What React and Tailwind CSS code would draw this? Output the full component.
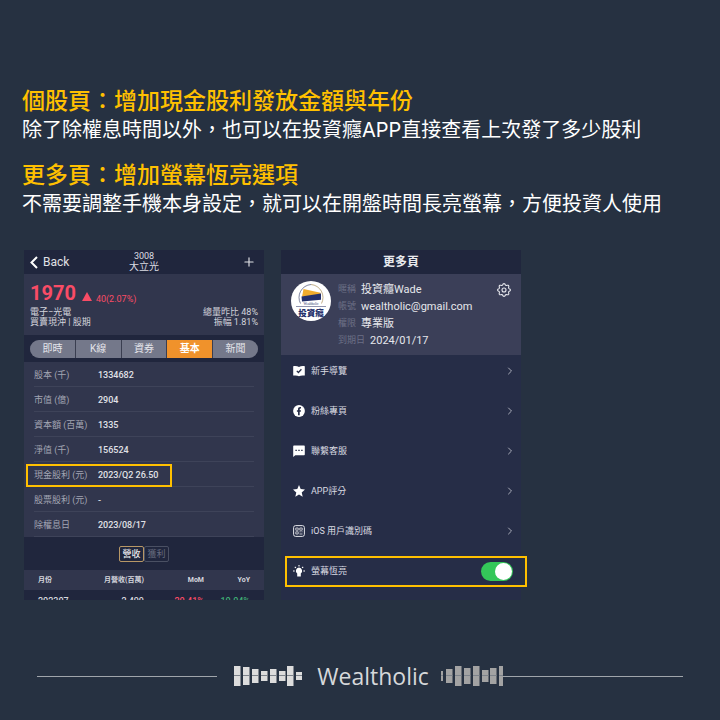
import React, { useState } from 'react';
import { ChevronRight, Plus } from 'lucide-react';

const announcements = [
  {
    title: '個股頁：增加現金股利發放金額與年份',
    text: '除了除權息時間以外，也可以在投資癮APP直接查看上次發了多少股利'
  },
  {
    title: '更多頁：增加螢幕恆亮選項',
    text: '不需要調整手機本身設定，就可以在開盤時間長亮螢幕，方便投資人使用'
  }
];

const tabs = ['即時', 'K線', '資券', '基本', '新聞'];

const fundamentals = [
  { label: '股本 (千)', value: '1334682' },
  { label: '市值 (億)', value: '2904' },
  { label: '資本額 (百萬)', value: '1335' },
  { label: '淨值 (千)', value: '156524' },
  { label: '現金股利 (元)', value: '2023/Q2 26.50', highlight: true },
  { label: '股票股利 (元)', value: '-' },
  { label: '除權息日', value: '2023/08/17' }
];

const profile = [
  { label: '暱稱', value: '投資癮Wade' },
  { label: '帳號', value: 'wealtholic@gmail.com' },
  { label: '權限', value: '專業版' },
  { label: '到期日', value: '2024/01/17' }
];

// [x, height, width] of every bar in the brand mark
const leftBars = [[0, 20], [9, 18], [18, 14], [27, 10], [36, 14], [45, 10], [53, 20], [62, 8]];
const rightBars = [[0, 10, 2], [5, 14], [14, 20], [23, 16], [32, 20], [41, 12], [49, 16], [58, 20, 4]];

const Bars = ({ bars, width, color }) => (
  <svg width={width} height="20" viewBox={`0 0 ${width} 20`} className="shrink-0" aria-hidden="true">
    {bars.map(([x, h, w = 6.5]) => (
      <g key={x}>
        <rect x={x} y={10 - h / 2} width={w} height={h} fill={color} />
        <rect x={x} y="9" width={w} height="1" fill="#7d838b" />
      </g>
    ))}
  </svg>
);

const BackIcon = () => (
  <svg viewBox="0 0 8 13" className="h-[13px] w-2">
    <path d="M7 1 1.500 6.500 7 12" fill="none" stroke="#fff" strokeWidth="2" />
  </svg>
);

// eight-toothed cog, traced as a wavy circle
const gearPoints = Array.from({ length: 96 }, (_, i) => {
  const a = (i / 96) * Math.PI * 2;
  const r = 5.7 + 0.7 * Math.cos(8 * a);
  return `${(7 + r * Math.cos(a)).toFixed(2)},${(7 + r * Math.sin(a)).toFixed(2)}`;
}).join(' ');

const GearIcon = () => (
  <svg viewBox="0 0 14 14" className="size-3.5" fill="none" stroke="#e6e7ec" strokeWidth="1.100">
    <polygon points={gearPoints} />
    <circle cx="7" cy="7" r="2" />
  </svg>
);

const TourIcon = () => (
  <svg viewBox="0 0 12 12" className="size-3">
    <path d="M.2 1.300C2.400.9 4.600 1.200 6 2c1.400-.8 3.600-1.100 5.800-.7v9.300C9.600 10.300 7.400 10.400 6 11.200c-1.400-.8-3.600-.9-5.800-.6z" fill="#fff" />
    <path d="m3.800 5.900 1.600 1.600 3-3.200" fill="none" stroke="#262d47" strokeWidth="1.300" />
  </svg>
);

const FacebookIcon = () => (
  <svg viewBox="0 0 12 12" className="size-3">
    <circle cx="6" cy="6" r="5.900" fill="#fff" />
    <path d="M5 10.300V6.800H3.900V5.200H5v-.9c0-1.700 1-2.500 3-2.200v1.400c-.9 0-1.300.1-1.300.8v.9H8l-.2 1.600H6.700v3.500z" fill="#262d47" />
  </svg>
);

const ChatIcon = () => (
  <svg viewBox="0 0 12 12" className="size-3">
    <path d="M1.200.5h9.600c.6 0 1 .4 1 1v7.700c0 .6-.4 1-1 1H2.300L.2 11.900V1.500c0-.6.4-1 1-1z" fill="#fff" />
    <path d="M2.400 4.700h1.400v1.400H2.400zm2.900 0h1.400v1.400H5.300zm2.900 0h1.400v1.400H8.200z" fill="#262d47" />
  </svg>
);

const StarIcon = () => (
  <svg viewBox="0 0 12 12" className="size-3">
    <path d="m6 .1 1.700 4 4.300.4-3.300 2.900 1 4.300L6 9.400l-3.700 2.300 1-4.300L0 4.500l4.300-.4z" fill="#fff" />
  </svg>
);

const CodeIcon = () => (
  <svg viewBox="0 0 12 12" className="size-3" fill="none" stroke="#e4e5ea">
    <rect x=".6" y=".6" width="10.800" height="10.800" rx="2" strokeWidth="1" />
    <path d="M2.800 3h2.400v2.200H2.800zM6.800 3h2.400v2.200H6.800zM2.800 6.800h2.400V9H2.800zM6.500 6.800h1.200M8.500 6.800h1M6.500 9h3" strokeWidth=".8" />
  </svg>
);

const BulbIcon = () => (
  <svg viewBox="0 0 12 12" className="size-3" stroke="#fff">
    <path d="M6 2.500a3.400 3.400 0 0 1 1.800 6.100v2.800H4.200V8.600A3.400 3.400 0 0 1 6 2.500z" fill="#fff" stroke="none" />
    <path d="M6 .1v1.500M0 6h1.700M10.300 6H12M1.800 1.800l1.100 1.100M10.200 1.800 9.100 2.900" strokeWidth="1.100" />
  </svg>
);

const menu = [
  { label: '新手導覽', icon: TourIcon },
  { label: '粉絲專頁', icon: FacebookIcon },
  { label: '聯繫客服', icon: ChatIcon },
  { label: 'APP評分', icon: StarIcon },
  { label: 'iOS 用戶識別碼', icon: CodeIcon }
];

const Avatar = () => (
  <svg viewBox="0 0 40 40" className="size-10 shrink-0" role="img" aria-label="投資癮">
    <circle cx="20" cy="20" r="20" fill="#fff" />
    <path d="M9.500 22.500A13 13 0 0 1 20 3.500" fill="none" stroke="#5f6688" strokeWidth=".8" />
    <path d="M20 3.500a13 13 0 0 1 10.500 19" fill="none" stroke="#b39a6b" strokeWidth=".8" />
    <path d="m12.500 8 17 3.800v2l-18.500 2z" fill="#f0ac2e" />
    <path d="m10.500 15.500 19.500-3v6.300L11 20.500z" fill="#24306b" />
    <path d="M5 25.500h30" stroke="#73789a" strokeWidth=".8" />
    <text x="20" y="23.600" fontSize="3.500" textAnchor="middle" fill="#24306b" fontFamily="Liberation Serif, serif">Wealtholic</text>
    <text x="20" y="34.500" fontSize="8.500" fontWeight="900" textAnchor="middle" fill="#24306b" fontFamily="'Noto Sans CJK TC', sans-serif">投資癮</text>
  </svg>
);

const StockPanel = () => {
  const [activeTab, setActiveTab] = useState('基本');
  const [report, setReport] = useState('營收');

  return (
    <section className="flex h-[350px] flex-col overflow-hidden bg-[#31364d]">
      <header className="grid h-6 shrink-0 grid-cols-3 items-center bg-[#20263d] px-[6px]">
        <button className="flex items-center gap-[5px] text-[12px] leading-4 text-[#e0e1e6]">
          <BackIcon />
          Back
        </button>
        <div className="text-center text-[10px] leading-3 text-[#dcdde3]">
          <p className="text-[9px] leading-[10px]">3008</p>
          <h3>大立光</h3>
        </div>
        <button aria-label="新增" className="justify-self-end pr-0.5">
          <Plus className="size-3.5 text-[#e0e1e6]" strokeWidth={2} />
        </button>
      </header>

      {/* Quote */}
      <div className="h-[61px] shrink-0 px-[6px] pt-2">
        <div className="flex items-center text-[#f94c66]">
          <span className="text-[20px] leading-[23px] font-bold">1970</span>
          <svg viewBox="0 0 10 9" className="mt-1.5 ml-[6px] h-[9px] w-[10px]">
            <path d="M5 0l5 9H0z" fill="currentColor" />
          </svg>
          <span className="mt-2.5 ml-1 text-[9px] leading-3">40(2.07%)</span>
        </div>
        <div className="mt-0.5 flex justify-between text-[9px] leading-[10px] text-[#d3d4dc]">
          <div>
            <p>電子−光電</p>
            <p>買賣現沖 | 股期</p>
          </div>
          <div className="text-right">
            <p>總量昨比 48%</p>
            <p>振幅 1.81%</p>
          </div>
        </div>
      </div>

      <nav className="h-[27px] shrink-0 bg-[#20263d] px-[6px] pt-[5px]">
        <div className="grid h-[18px] grid-cols-5 gap-px overflow-hidden rounded-full bg-[#3a3e50]">
          {tabs.map((tab) => (
            <button
              key={tab}
              onClick={() => setActiveTab(tab)}
              className={`text-[10px] leading-[18px] ${
                tab === activeTab ? 'bg-[#f0922b] font-bold text-white' : 'bg-[#74788a] text-[#e4e5ea]'
              }`}
            >
              {tab}
            </button>
          ))}
        </div>
      </nav>

      <dl className="shrink-0 px-[10px] text-[9px]">
        {fundamentals.map((item) => (
          <div key={item.label} className="relative flex h-[25px] items-center border-b border-[#3e4359] pt-[3px]">
            <dt className="w-16 whitespace-nowrap text-[#a2a5b3]">{item.label}</dt>
            <dd className="font-medium text-[#e0e1e7]">{item.value}</dd>
            {item.highlight && (
              <span className="absolute top-0.5 -left-2 h-[23px] w-[146px] border-2 border-[#ffc000]" />
            )}
          </div>
        ))}
      </dl>

      <div className="flex h-[33px] shrink-0 items-center justify-center bg-[#20263d]">
        {['營收', '獲利'].map((name) => (
          <button
            key={name}
            onClick={() => setReport(name)}
            className={`h-4 w-[25px] rounded-xs border text-[9px] leading-[14px] ${
              name === report ? 'border-[#b79766] font-medium text-[#e8e8ec]' : 'border-[#4a5063] text-[#666b7e]'
            }`}
          >
            {name}
          </button>
        ))}
      </div>

      <table className="w-full table-fixed text-right">
        <thead>
          <tr className="h-5 text-[7px] text-[#d6d7de]">
            <th className="w-[23%] pl-3.5 text-left font-bold">月份</th>
            <th className="w-[27%] font-bold">月營收(百萬)</th>
            <th className="w-1/4 font-bold">MoM</th>
            <th className="pr-3.5 font-bold">YoY</th>
          </tr>
        </thead>
        <tbody className="bg-[#20263d]">
          <tr className="text-[9px] leading-[22px] font-medium text-[#d6d7de]">
            <td className="pl-3.5 text-left">202307</td>
            <td>2,499</td>
            <td className="text-[#f94c66]">20.41%</td>
            <td className="pr-3.5 text-[#3fae74]">10.04%</td>
          </tr>
        </tbody>
      </table>
    </section>
  );
};

const MorePanel = () => {
  const [keepAwake, setKeepAwake] = useState(true);

  return (
    <section className="bg-[#262d47]">
      <h3 className="bg-[#20263d] text-center text-[12px] leading-6 font-bold text-[#e8e9ed]">更多頁</h3>

      {/* Profile */}
      <div className="flex h-[81px] items-start bg-[#3b3f58] px-[10px] pt-[7px]">
        <Avatar />
        <dl className="ml-[7px] flex-1 text-[11px] leading-[17px]">
          {profile.map((item) => (
            <div key={item.label} className="flex gap-[5px]">
              <dt className="text-[9px] text-[#6c7086]">{item.label}</dt>
              <dd className="text-[#e6e7ec]">{item.value}</dd>
            </div>
          ))}
        </dl>
        <button aria-label="設定" className="pt-0.5">
          <GearIcon />
        </button>
      </div>

      <ul className="flex flex-col gap-2 pb-[13px] text-[9px] text-[#dadbe2]">
        {menu.map(({ label, icon: Icon }) => (
          <li key={label}>
            <button className="flex h-8 w-full items-center gap-1.5 pr-[5px] pl-3">
              <Icon />
              <span className="pt-0.5">{label}</span>
              <ChevronRight className="ml-auto size-3 text-[#a9acb9]" />
            </button>
          </li>
        ))}
        <li className="relative">
          <label className="flex h-8 items-center gap-1.5 pr-2 pl-3">
            <BulbIcon />
            <span className="pt-0.5">螢幕恆亮</span>
            <input
              type="checkbox"
              role="switch"
              checked={keepAwake}
              onChange={(e) => setKeepAwake(e.target.checked)}
              className="ml-auto flex h-[19px] w-8 cursor-pointer appearance-none rounded-full bg-[#5a5f73] p-px before:size-[17px] before:rounded-full before:bg-white checked:justify-end checked:bg-[#34c759]"
            />
          </label>
          <span className="pointer-events-none absolute -right-1.5 bottom-0 left-1 h-[31px] border-2 border-[#ffc000]" />
        </li>
      </ul>
    </section>
  );
};

const App = () => (
  <main
    lang="zh-Hant"
    className="flex min-h-screen flex-col bg-[#263141] pt-[87px] font-[Roboto,'Noto_Sans_CJK_TC',sans-serif]"
  >
    <div className="flex flex-col gap-4 px-[22px] font-[Inter,'Noto_Sans_CJK_TC',sans-serif]">
      {announcements.map((item) => (
        <article key={item.title}>
          <h2 className="text-[23px] leading-7 font-medium text-[#ffc000]">{item.title}</h2>
          <p className="text-[20px] leading-[30px] text-white">{item.text}</p>
        </article>
      ))}
    </div>

    {/* App screens */}
    <div className="mt-[31px] grid w-full max-w-[545px] grid-cols-2 gap-[17px] px-6">
      <StockPanel />
      <MorePanel />
    </div>

    <footer className="mt-auto flex items-center px-[37px] pb-[26px]">
      <span className="h-px flex-1 bg-[#a0a5ab]" />
      <span className="mr-[15px] ml-[17px] flex">
        <Bars bars={leftBars} width={68} color="#dcdcdc" />
      </span>
      <span className="font-['Open_Sans',sans-serif] text-[23px] leading-9 text-[#d6d8da]">Wealtholic</span>
      <span className="ml-[12px] flex">
        <Bars bars={rightBars} width={62} color="#a3a3a3" />
      </span>
      <span className="h-px flex-1 bg-[#a0a5ab]" />
    </footer>
  </main>
);

export default App;
